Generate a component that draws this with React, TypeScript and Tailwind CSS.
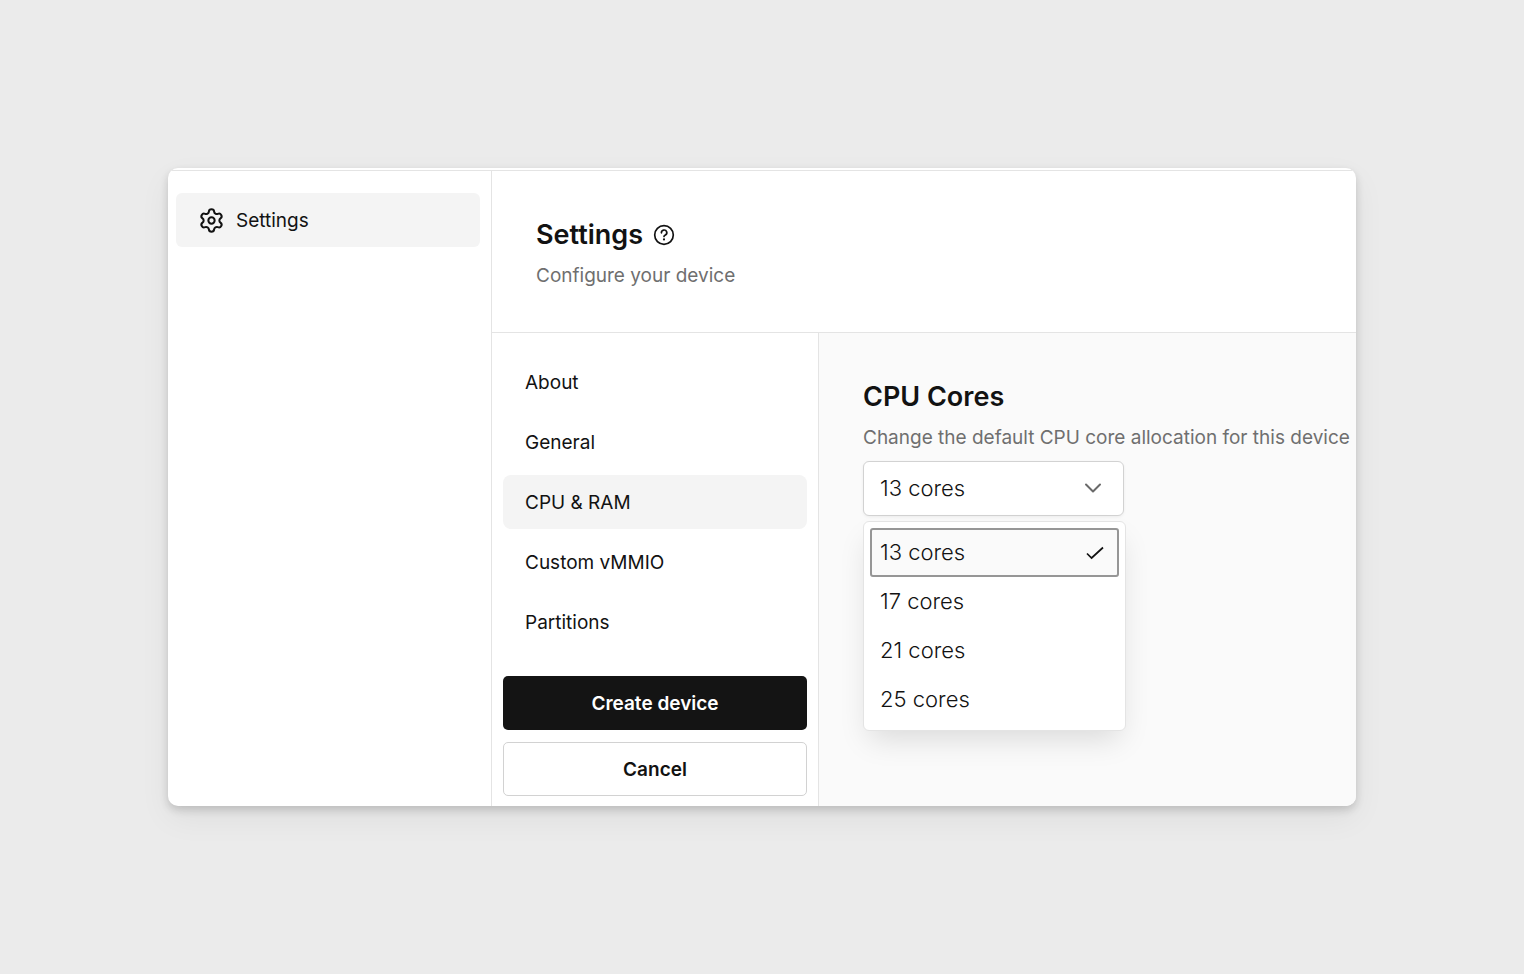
import { useState } from 'react'

interface NavItemProps {
	label: string
	active: boolean
	onClick: () => void
}

const sections = ['About', 'General', 'CPU & RAM', 'Custom vMMIO', 'Partitions']
const coreOptions = [13, 17, 21, 25]

const GearIcon = () => (
	<svg
		width={27}
		height={27}
		viewBox="0 0 24 24"
		fill="none"
		stroke="currentColor"
		strokeWidth={1.8}
		strokeLinecap="round"
		strokeLinejoin="round"
		aria-hidden="true"
	>
		<path d="M9.671 4.136a2.34 2.34 0 0 1 4.659 0 2.34 2.34 0 0 0 3.319 1.915 2.34 2.34 0 0 1 2.33 4.033 2.34 2.34 0 0 0 0 3.831 2.34 2.34 0 0 1-2.33 4.033 2.34 2.34 0 0 0-3.319 1.915 2.34 2.34 0 0 1-4.659 0 2.34 2.34 0 0 0-3.32-1.915 2.34 2.34 0 0 1-2.33-4.033 2.34 2.34 0 0 0 0-3.831A2.34 2.34 0 0 1 6.35 6.051a2.34 2.34 0 0 0 3.319-1.915" />
		<circle cx="12" cy="12" r="2.8" />
	</svg>
)

const HelpIcon = () => (
	<svg
		width={22}
		height={22}
		viewBox="0 0 22 22"
		fill="none"
		stroke="currentColor"
		strokeWidth={1.7}
		strokeLinecap="round"
		strokeLinejoin="round"
		aria-hidden="true"
	>
		<circle cx="11" cy="11" r="9.3" />
		<path d="M8.4 8.8a2.7 2.7 0 1 1 4 2.3c-.9.5-1.4 1-1.4 1.4" />
		<circle cx="11" cy="15.4" r="1.1" fill="currentColor" stroke="none" />
	</svg>
)

const NavItem: React.FC<NavItemProps> = ({ label, active, onClick }) => (
	<li>
		<button
			type="button"
			onClick={onClick}
			aria-current={active ? 'page' : undefined}
			className={
				active
					? 'flex h-[54px] w-full items-center rounded-lg bg-[#f4f4f4] px-[22px] cursor-pointer'
					: 'flex h-[54px] w-full items-center rounded-lg px-[22px] cursor-pointer hover:bg-[#f9f9f9]'
			}
		>
			{label}
		</button>
	</li>
)

const App: React.FC = () => {
	const [section, setSection] = useState('CPU & RAM')
	const [cores, setCores] = useState(13)

	return (
		<div
			className="
				flex min-h-screen items-center bg-[#ebebeb] p-42
				font-[Inter,sans-serif] text-[19px] leading-[25px] text-[#121212] antialiased"
		>
			<div
				className="
					w-full overflow-hidden rounded-[10px] bg-white pt-[2px]
					shadow-[0_4px_8px_rgba(0,0,0,0.16),0_12px_32px_rgba(0,0,0,0.06)]"
			>
				<div className="flex border-t border-[#e4e4e4]">
					<aside className="w-81 shrink-0 border-r border-[#e4e4e4] pt-[22px] pr-[11px] pl-2">
						<a
							href="#settings"
							className="flex h-[54px] items-center gap-[11px] rounded-md bg-[#f4f4f4] px-[22px]"
						>
							<GearIcon />
							Settings
						</a>
					</aside>

					<main className="min-w-0 flex-1">
						<header className="border-b border-[#e4e4e4] px-11 pt-11 pb-11">
							<div className="flex items-center gap-[10px]">
								<h1 className="text-[27px] leading-10 font-semibold">
									Settings
								</h1>
								<button
									type="button"
									aria-label="Help"
									className="cursor-pointer"
								>
									<HelpIcon />
								</button>
							</div>
							<p className="mt-2 text-[#6f6f6f]">
								Configure your device
							</p>
						</header>

						<div className="flex">
							<div className="w-[327px] shrink-0 border-r border-[#e4e4e4] px-[11px] pt-[22px] pb-[10px]">
								<nav aria-label="Device settings">
									<ul className="flex flex-col gap-[6px]">
										{sections.map((label) => (
											<NavItem
												key={label}
												label={label}
												active={label === section}
												onClick={() => setSection(label)}
											/>
										))}
									</ul>
								</nav>
								<div className="mt-[27px] flex flex-col gap-3 font-semibold">
									<button
										type="button"
										className="h-[54px] rounded-[5px] bg-[#141414] text-white cursor-pointer"
									>
										Create device
									</button>
									<button
										type="button"
										className="h-[54px] rounded-[5px] border border-[#d2d2d2] bg-white cursor-pointer"
									>
										Cancel
									</button>
								</div>
							</div>

							<section className="min-w-0 flex-1 bg-[#fafafa] pt-11 pl-11">
								<h2 className="text-[27px] leading-10 font-semibold">
									CPU Cores
								</h2>
								<label
									htmlFor="cores"
									className="mt-2 block whitespace-nowrap text-[#6f6f6f]"
								>
									Change the default CPU core allocation for this device
								</label>
								<div className="relative mt-[11px] w-[261px] text-[22px] font-light">
									<select
										id="cores"
										value={cores}
										onChange={(ev) => setCores(Number(ev.target.value))}
										className="
											block h-[55px] w-full cursor-pointer appearance-none
											rounded-md border border-[#d2d2d2] bg-white px-4
											shadow-[0_1px_3px_rgba(0,0,0,0.06)]"
									>
										{coreOptions.map((count) => (
											<option key={count} value={count}>
												{count} cores
											</option>
										))}
									</select>
									<svg
										width={18}
										height={12}
										viewBox="0 0 18 12"
										fill="none"
										stroke="#6a6a6a"
										strokeWidth={2}
										strokeLinecap="round"
										strokeLinejoin="round"
										aria-hidden="true"
										className="pointer-events-none absolute top-[21px] right-[22px]"
									>
										<path d="M2 2.5l7 7 7-7" />
									</svg>

									<ul
										role="listbox"
										aria-label="CPU cores"
										className="
											absolute top-[60px] left-0 w-[263px] rounded-md
											border border-[#e4e4e4] bg-white p-[6px]
											shadow-[0_14px_28px_-6px_rgba(0,0,0,0.13)]"
									>
										{coreOptions.map((count) => (
											<li
												key={count}
												role="option"
												aria-selected={count === cores}
												onClick={() => setCores(count)}
												className={
													count === cores
														? 'flex h-[49px] items-center justify-between rounded-[3px] border-2 border-[#969696] bg-[#fafafa] pr-[13px] pl-2'
														: 'flex h-[49px] cursor-pointer items-center rounded-[3px] px-[10px] hover:bg-[#fafafa]'
												}
											>
												{count} cores
												{count === cores && (
													<svg
														width={18}
														height={14}
														viewBox="0 0 18 14"
														fill="none"
														stroke="currentColor"
														strokeWidth={1.7}
														aria-hidden="true"
													>
														<path d="M1 7.5l4.6 4.5L17 1.5" />
													</svg>
												)}
											</li>
										))}
									</ul>
								</div>
							</section>
						</div>
					</main>
				</div>
			</div>
		</div>
	)
}

export default App
